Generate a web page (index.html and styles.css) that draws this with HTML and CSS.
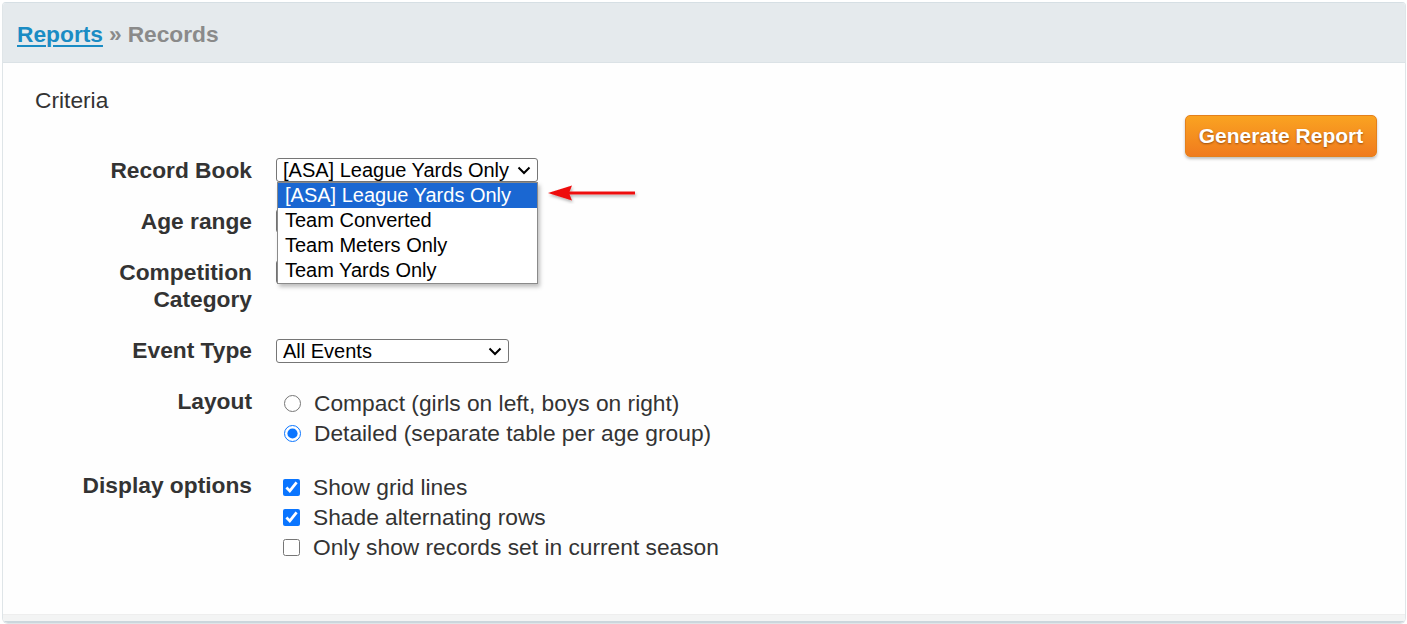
FILE: index.html
```html
<!DOCTYPE html>
<html>
<head>
<meta charset="utf-8">
<title>Reports » Records</title>
<link rel="stylesheet" href="styles.css">
</head>
<body>
<div class="panel">
  <div class="panel-head">
    <a class="crumb-link" href="#">Reports</a> <span class="crumb-sep">»</span> <span class="crumb-current">Records</span>
  </div>
  <div class="panel-body">
    <h3 class="section-title">Criteria</h3>
    <div class="criteria">
      <div class="form-grid">
        <div class="label">Record Book</div>
        <div class="control">
          <div class="select-wrap">
            <select class="sel sel-book">
              <option>[ASA] League Yards Only</option>
              <option>Team Converted</option>
              <option>Team Meters Only</option>
              <option>Team Yards Only</option>
            </select>
            <svg class="chev" width="14" height="9" viewBox="0 0 14 9"><path d="M1.5 1.5 L7 7 L12.5 1.5" fill="none" stroke="#000" stroke-width="2"/></svg>
            <div class="dropdown">
              <div class="opt opt-selected">[ASA] League Yards Only</div>
              <div class="opt">Team Converted</div>
              <div class="opt">Team Meters Only</div>
              <div class="opt">Team Yards Only</div>
            </div>
            <svg class="pointer" width="92" height="20" viewBox="0 0 92 20">
              <defs>
                <filter id="sh" x="-10%" y="-50%" width="130%" height="220%">
                  <feDropShadow dx="1" dy="2" stdDeviation="1.5" flood-color="#000" flood-opacity="0.3"/>
                </filter>
              </defs>
              <g filter="url(#sh)">
                <polygon points="1,9 25,1.5 22,9 25,16.5" fill="#ee1111"/>
                <rect x="22" y="7.5" width="66" height="3" fill="#ee1111"/>
              </g>
            </svg>
          </div>
        </div>

        <div class="label">Age range</div>
        <div class="control">
          <div class="select-wrap">
            <select class="sel sel-age"><option>All Ages</option></select>
            <svg class="chev" width="14" height="9" viewBox="0 0 14 9"><path d="M1.5 1.5 L7 7 L12.5 1.5" fill="none" stroke="#000" stroke-width="2"/></svg>
          </div>
        </div>

        <div class="label">Competition<br>Category</div>
        <div class="control">
          <div class="select-wrap">
            <select class="sel sel-comp"><option>All</option></select>
            <svg class="chev" width="14" height="9" viewBox="0 0 14 9"><path d="M1.5 1.5 L7 7 L12.5 1.5" fill="none" stroke="#000" stroke-width="2"/></svg>
          </div>
        </div>

        <div class="label">Event Type</div>
        <div class="control">
          <div class="select-wrap">
            <select class="sel sel-event"><option>All Events</option></select>
            <svg class="chev" width="14" height="9" viewBox="0 0 14 9"><path d="M1.5 1.5 L7 7 L12.5 1.5" fill="none" stroke="#000" stroke-width="2"/></svg>
          </div>
        </div>

        <div class="label">Layout</div>
        <div class="control choices">
          <label class="choice"><input type="radio" name="layout" class="radio"><span>Compact (girls on left, boys on right)</span></label>
          <label class="choice"><input type="radio" name="layout" class="radio" checked><span>Detailed (separate table per age group)</span></label>
        </div>

        <div class="label">Display options</div>
        <div class="control choices">
          <label class="choice"><input type="checkbox" class="check" checked><span>Show grid lines</span></label>
          <label class="choice"><input type="checkbox" class="check" checked><span>Shade alternating rows</span></label>
          <label class="choice"><input type="checkbox" class="check"><span>Only show records set in current season</span></label>
        </div>
      </div>
      <button class="btn-generate">Generate Report</button>
    </div>
  </div>
  <div class="panel-foot"></div>
</div>
</body>
</html>
```

FILE: styles.css
```css
html, body {
  margin: 0;
  padding: 0;
  background: #ffffff;
}

body {
  padding: 2px 1px 0 2px;
  font-family: "Liberation Sans", Arial, sans-serif;
  color: #333333;
}

.panel {
  border: 1px solid #dfe5e8;
  border-top: 1px solid #d6dfe4;
  border-radius: 4px 4px 6px 6px;
  overflow: hidden;
  background: #fefefe;
}

.panel-head {
  height: 60px;
  box-sizing: border-box;
  padding: 4px 14px 0 14px;
  background: #e5eaed;
  border-bottom: 1px solid #dbe2e6;
  display: flex;
  align-items: center;
  font-size: 22.75px;
  font-weight: bold;
  gap: 6px;
}

.crumb-link {
  color: #1a8cc4;
  text-decoration: underline;
  text-underline-offset: 3px;
  text-decoration-thickness: 2px;
}

.crumb-sep,
.crumb-current {
  color: #8a8a8a;
}

.panel-body {
  min-height: 527px;
  padding: 24px 28px 0 32px;
}

.section-title {
  margin: 0;
  font-size: 22.75px;
  font-weight: normal;
  line-height: 27px;
  color: #333;
}

.criteria {
  display: flex;
  justify-content: space-between;
  align-items: flex-start;
}

.form-grid {
  display: grid;
  grid-template-columns: 217px auto;
  column-gap: 24px;
  row-gap: 24.2px;
  margin-top: 42.5px;
}

.label {
  text-align: right;
  font-weight: bold;
  font-size: 22.75px;
  line-height: 27px;
  color: #333;
}

.control {
  min-height: 27px;
}

.select-wrap {
  position: relative;
  display: inline-block;
}

.sel {
  display: block;
  margin: 1.5px 0 0 0;
  height: 24px;
  font-family: "Liberation Sans", Arial, sans-serif;
  font-size: 20px;
  color: #000;
  background: #fff;
  border: 1px solid #767676;
  border-radius: 3px;
  padding: 0 0 0 6px;
  appearance: none;
  -webkit-appearance: none;
}

.chev {
  position: absolute;
  right: 7px;
  top: 9.5px;
  pointer-events: none;
}

.sel-book { width: 262px; }
.sel-age { width: 150px; }
.sel-comp { width: 150px; }
.sel-event { width: 233px; }

.dropdown {
  position: absolute;
  left: 1px;
  top: 25px;
  width: 259px;
  background: #fff;
  border: 1px solid #8a8a8a;
  box-shadow: 2px 3px 4px rgba(0, 0, 0, 0.25);
  z-index: 5;
}

.opt {
  height: 25px;
  line-height: 24px;
  font-size: 20px;
  padding-left: 7px;
  color: #000;
  white-space: nowrap;
}

.opt-selected {
  background: #1a67d2;
  color: #fff;
}

.pointer {
  position: absolute;
  left: 271px;
  top: 27px;
  z-index: 6;
}

.choices {
  display: flex;
  flex-direction: column;
}

.choice {
  display: flex;
  align-items: center;
  height: 30px;
  font-size: 22.75px;
  color: #333;
}

.radio,
.check {
  width: 17px;
  height: 17px;
  margin: 0;
  accent-color: #0a75ff;
}

.radio {
  margin-left: 8px;
  margin-right: 13px;
}

.check {
  margin-left: 7px;
  margin-right: 13px;
}

.btn-generate {
  margin-top: 0.5px;
  height: 42px;
  width: 192px;
  font-family: "Liberation Sans", Arial, sans-serif;
  font-size: 21px;
  font-weight: bold;
  color: #fff;
  text-shadow: 0 1px 2px rgba(100, 40, 0, 0.6);
  background: linear-gradient(#faa321, #f07b1e);
  border: 1px solid #e4801c;
  border-radius: 5px;
  box-shadow: 0 2px 3px rgba(0, 0, 0, 0.25);
  padding: 0;
}

.panel-foot {
  height: 6px;
  background: #f3f4f4;
  border-top: 1px solid #eeeeee;
  border-bottom: 2px solid #cbd6dc;
}
```
